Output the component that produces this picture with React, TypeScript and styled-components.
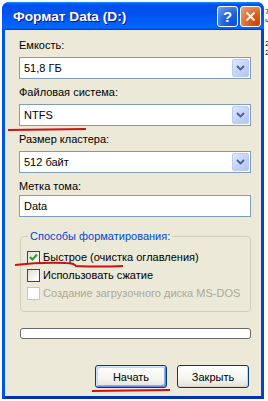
import React from 'react'
import styled, { createGlobalStyle } from 'styled-components'

const GlobalStyle = createGlobalStyle`
  html, body {
    margin: 0;
    padding: 0;
    background: #ffffff;
  }
  body {
    font-family: "Liberation Sans", Arial, sans-serif;
    font-size: 11px;
    color: #000;
  }
`

const Page = styled.div`
  position: relative;
  display: flex;
  width: 268px;
  height: 401px;
  padding: 2px 0 0 2px;
  box-sizing: border-box;
  overflow: hidden;
`

const Backdrop = styled.div`
  display: flex;
  flex-direction: column;
  padding-left: 1px;
  font-size: 8px;
  line-height: 9px;
  color: #000;
  div:nth-child(1) { margin-top: 5px; }
  div:nth-child(3) { margin-top: 14px; }
`

const Window = styled.div`
  width: 262px;
  height: 397px;
  display: flex;
  flex-direction: column;
  flex-shrink: 0;
  border-radius: 7px 7px 0 0;
  overflow: hidden;
  background: #0055e5;
`

const TitleBar = styled.div`
  height: 28px;
  display: flex;
  align-items: center;
  padding: 0 3px 0 11px;
  background: linear-gradient(
    #0997ff 0%,
    #0053ee 8%,
    #0050ee 40%,
    #0066ff 88%,
    #0066ff 93%,
    #005bff 95%,
    #003dd7 96%,
    #003dd7 100%
  );
`

const Title = styled.div`
  flex: 1;
  color: #fff;
  font-family: "Liberation Sans", Arial, sans-serif;
  font-weight: bold;
  font-size: 13.7px;
  text-shadow: 1px 1px #0f1089;
`

const CaptionButton = styled.div<{ $kind: 'help' | 'close' }>`
  width: 21px;
  height: 21px;
  box-sizing: border-box;
  margin-left: 2px;
  border: 1px solid #fff;
  border-radius: 3px;
  display: flex;
  align-items: center;
  justify-content: center;
  color: #fff;
  font-weight: bold;
  font-size: 15px;
  background: ${p =>
    p.$kind === 'close'
      ? 'radial-gradient(circle at 85% 85%, #cc4600 0%, #dc6527 45%, #e28457 70%, #e9a381 100%)'
      : 'radial-gradient(circle at 85% 85%, #0054e9 0%, #2263d5 45%, #4f86ec 75%, #7ba7f5 100%)'};
`

const Frame = styled.div`
  flex: 1;
  display: flex;
  border-left: 3px solid #0055e5;
  border-right: 3px solid #0044cf;
  border-bottom: 3px solid #0033b4;
`

const Body = styled.div`
  flex: 1;
  background: #ece9d8;
  padding: 8px 9px 0 14px;
  display: flex;
  flex-direction: column;
`

const Field = styled.div<{ $tight?: boolean }>`
  display: flex;
  flex-direction: column;
  margin-bottom: 6px;
  label {
    line-height: 14px;
    margin-bottom: ${p => (p.$tight ? 2 : 5)}px;
  }
`

const SelectBox = styled.div`
  height: 22px;
  box-sizing: border-box;
  border: 1px solid #7f9db9;
  background: #fff;
  display: flex;
  align-items: center;
  padding: 0 1px 0 4px;
  margin-right: 1px;
`

const SelectValue = styled.div`
  flex: 1;
  line-height: 14px;
`

const DropButton = styled.div`
  width: 17px;
  height: 18px;
  box-sizing: border-box;
  border: 1px solid #bbcaf2;
  border-radius: 2px;
  background: linear-gradient(135deg, #dfe8fd 0%, #c4d4fa 50%, #b2c7f5 100%);
  display: flex;
  align-items: center;
  justify-content: center;
`

const TextInput = styled.div`
  height: 22px;
  box-sizing: border-box;
  border: 1px solid #7f9db9;
  background: #fff;
  display: flex;
  align-items: center;
  padding: 0 4px;
  margin-right: 1px;
`

const Group = styled.fieldset`
  margin: 6px 1px 0 1px;
  padding: 5px 6px 9px 6px;
  border: 1px solid #d0d0bf;
  border-radius: 4px;
  display: flex;
  flex-direction: column;
  legend {
    color: #0046d5;
    padding: 0 2px;
    margin-left: 1px;
    line-height: 14px;
  }
`

const CheckRow = styled.div<{ $disabled?: boolean }>`
  height: 18px;
  display: flex;
  align-items: center;
  gap: 3px;
  color: ${p => (p.$disabled ? '#aca899' : '#000')};
`

const Box = styled.div<{ $disabled?: boolean }>`
  width: 13px;
  height: 13px;
  box-sizing: border-box;
  border: 1px solid ${p => (p.$disabled ? '#cac8bb' : '#1c5180')};
  background: ${p =>
    p.$disabled ? '#fff' : 'linear-gradient(135deg, #dcdcd7 0%, #f5f5f2 60%, #ffffff 100%)'};
  display: flex;
  align-items: center;
  justify-content: center;
`

const Progress = styled.div`
  margin: 16px 1px 0 1px;
  height: 11px;
  box-sizing: border-box;
  border: 1px solid #686868;
  border-radius: 3px;
  background: #fff;
`

const Footer = styled.div`
  margin-top: auto;
  display: flex;
  justify-content: flex-end;
  gap: 10px;
  padding: 0 3px 8px 0;
`

const Button = styled.div<{ $default?: boolean }>`
  width: 72px;
  height: 23px;
  box-sizing: border-box;
  border: 1px solid #003c74;
  border-radius: 3px;
  background: linear-gradient(#ffffff 0%, #f4f4f0 60%, #e3e2da 100%);
  display: flex;
  align-items: center;
  justify-content: center;
  font-size: 11px;
  box-shadow: ${p =>
    p.$default
      ? 'inset 1px 1px 0 #cee7ff, inset -1px -1px 0 #6982ee, inset 2px 2px 0 #bcd4f6, inset -2px -2px 0 #89ade4'
      : 'inset -1px -1px 0 #d6d0c5'};
`

const Marks = styled.svg`
  position: absolute;
  left: 0;
  top: 0;
  pointer-events: none;
`

const Chevron = () => (
  <svg width="9" height="6" viewBox="0 0 9 6">
    <path d="M1 1 L4.5 4.5 L8 1" fill="none" stroke="#4d6185" strokeWidth="1.8" />
  </svg>
)

const Check = () => (
  <svg width="9" height="8" viewBox="0 0 9 8">
    <path d="M1 4 L3.5 6.5 L8 1.5" fill="none" stroke="#21a121" strokeWidth="2" />
  </svg>
)

const fields = [
  { label: 'Емкость:', value: '51,8 ГБ' },
  { label: 'Файловая система:', value: 'NTFS' },
  { label: 'Размер кластера:', value: '512 байт' },
]

const options = [
  { label: 'Быстрое (очистка оглавления)', checked: true },
  { label: 'Использовать сжатие' },
  { label: 'Создание загрузочного диска MS-DOS', disabled: true },
]

export default function App() {
  return (
    <>
      <GlobalStyle />
      <Page>
        <Window>
          <TitleBar>
            <Title>Формат Data (D:)</Title>
            <CaptionButton $kind="help">?</CaptionButton>
            <CaptionButton $kind="close">
              <svg width="11" height="11" viewBox="0 0 11 11">
                <path d="M1.5 1.5 L9.5 9.5 M9.5 1.5 L1.5 9.5" stroke="#fff" strokeWidth="2" />
              </svg>
            </CaptionButton>
          </TitleBar>
          <Frame>
            <Body>
              {fields.map(f => (
                <Field key={f.label}>
                  <label>{f.label}</label>
                  <SelectBox>
                    <SelectValue>{f.value}</SelectValue>
                    <DropButton>
                      <Chevron />
                    </DropButton>
                  </SelectBox>
                </Field>
              ))}
              <Field $tight>
                <label>Метка тома:</label>
                <TextInput>Data</TextInput>
              </Field>
              <Group>
                <legend>Способы форматирования:</legend>
                {options.map(o => (
                  <CheckRow key={o.label} $disabled={o.disabled}>
                    <Box $disabled={o.disabled}>{o.checked && <Check />}</Box>
                    {o.label}
                  </CheckRow>
                ))}
              </Group>
              <Progress />
              <Footer>
                <Button $default>Начать</Button>
                <Button>Закрыть</Button>
              </Footer>
            </Body>
          </Frame>
        </Window>
        <Backdrop>
          <div>7</div>
          <div>ч</div>
          <div>2</div>
          <div>2</div>
        </Backdrop>
        <Marks width="268" height="401">
          <path d="M8 130 L86 129" stroke="#cc1111" strokeWidth="2" fill="none" />
          <path
            d="M15 265 Q40 262 66 263 Q74 263 76 266 Q100 267 123 266"
            stroke="#cc1111"
            strokeWidth="2"
            fill="none"
          />
          <path d="M92 391 L170 390" stroke="#cc1111" strokeWidth="2" fill="none" />
        </Marks>
      </Page>
    </>
  )
}
